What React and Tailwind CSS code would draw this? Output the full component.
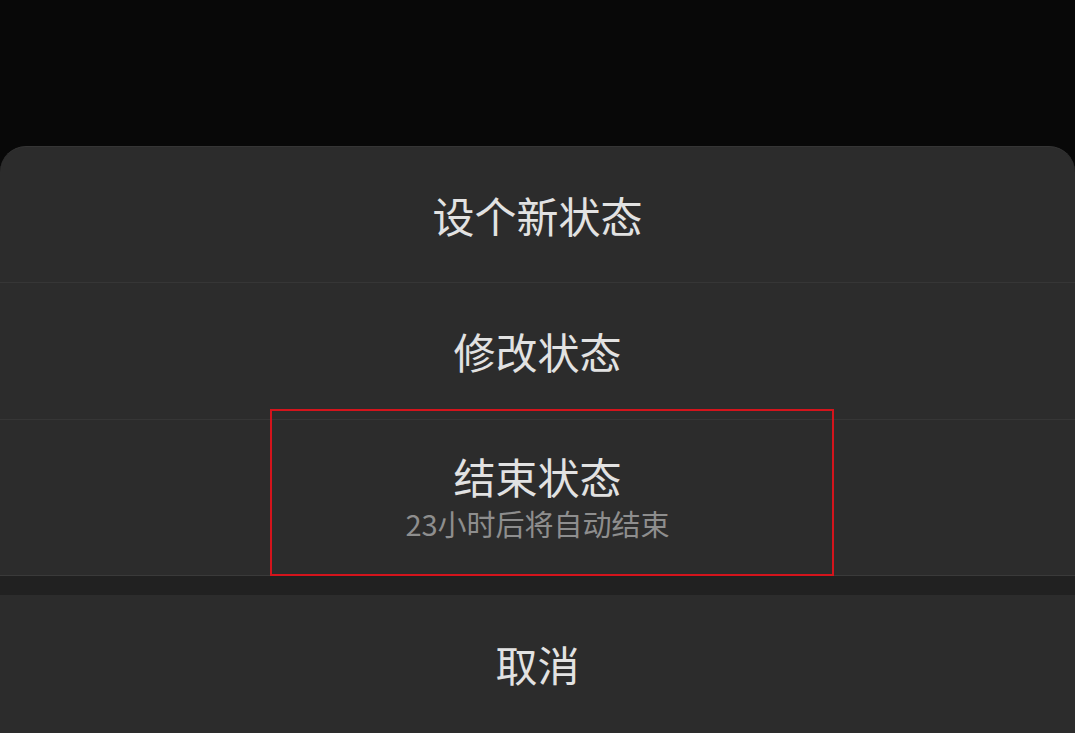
export default function App() {
  const font = { fontFamily: '"Noto Sans CJK SC", "Noto Sans", sans-serif' };

  return (
    <div className="flex h-[733px] w-[1075px] flex-col overflow-hidden bg-[#080808]" style={font}>
      <div className="h-[146px] shrink-0" />
      <div className="flex flex-1 flex-col overflow-hidden rounded-t-[26px] border-t border-[#353535] bg-[#2c2c2c]">
        <button className="flex h-[136px] shrink-0 items-center justify-center border-b border-[#363636] text-[42px] leading-none text-[#e2e2e2]">
          设个新状态
        </button>
        <button className="flex h-[137px] shrink-0 items-center justify-center border-b border-[#363636] text-[42px] leading-none text-[#e2e2e2]">
          修改状态
        </button>
        <div className="relative flex h-[156px] shrink-0 flex-col items-center justify-center border-b border-[#3a3a3a]">
          <span className="mt-[-2px] text-[42px] leading-none text-[#e2e2e2]">结束状态</span>
          <span className="mt-[12px] text-[29px] leading-none text-[#8e8e8e]">23小时后将自动结束</span>
          <div className="pointer-events-none absolute left-[270px] top-[-11px] h-[167px] w-[564px] border-2 border-[#d4141c]" />
        </div>
        <div className="h-[19px] shrink-0 bg-[#212121]" />
        <button className="flex flex-1 items-center justify-center text-[42px] leading-none text-[#e2e2e2]">
          取消
        </button>
      </div>
    </div>
  );
}
